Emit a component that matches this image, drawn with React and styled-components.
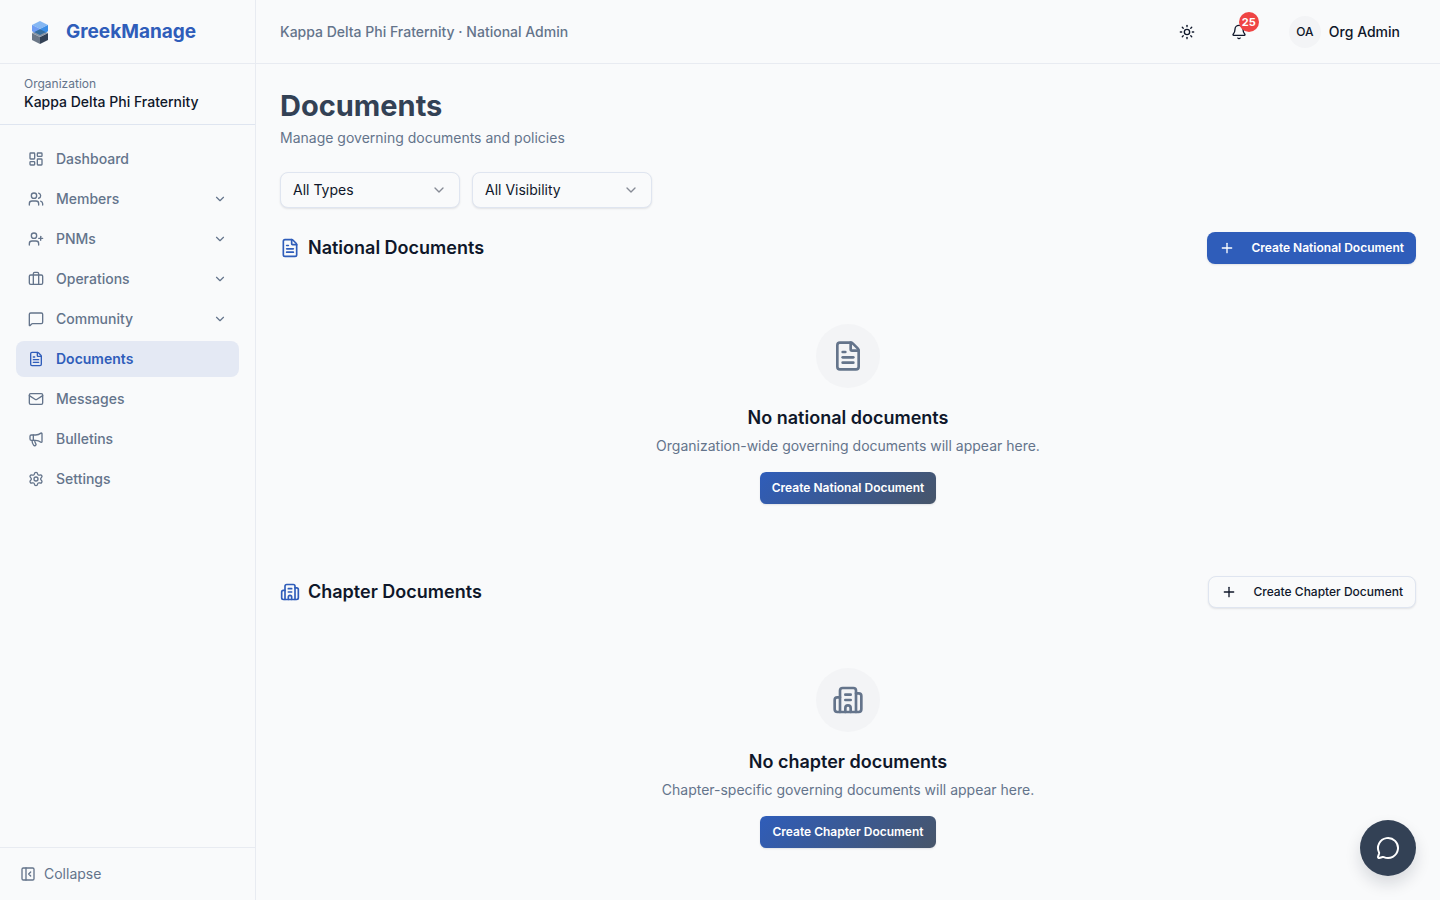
import React, { useState } from "react";
import styled, { createGlobalStyle, css } from "styled-components";
import {
  Bell,
  Briefcase,
  Building2,
  ChevronDown,
  FileText,
  LayoutDashboard,
  Mail,
  Megaphone,
  MessageCircle,
  MessageSquare,
  PanelLeftClose,
  Plus,
  Settings,
  Sun,
  UserPlus,
  Users,
} from "lucide-react";

const GlobalStyle = createGlobalStyle`
  * {
    box-sizing: border-box;
  }
  body {
    margin: 0;
    background: #f9fafb;
    color: #0f172a;
    font-family: Inter, "Liberation Sans", sans-serif;
    font-size: 14px;
    line-height: 20px;
  }
  button, select {
    font: inherit;
    color: inherit;
    cursor: pointer;
  }
  h1, h2, h3, p {
    margin: 0;
  }
  svg {
    flex-shrink: 0;
  }
`;

const Layout = styled.div`
  display: flex;
  height: 100vh;
`;

const Sidebar = styled.aside`
  display: flex;
  flex-direction: column;
  flex: 0 0 256px;
  border-right: 1px solid #e8ebf1;
`;

const Brand = styled.a`
  display: flex;
  align-items: center;
  gap: 14px;
  height: 64px;
  padding: 0 28px;
  border-bottom: 1px solid #e8ebf1;
  color: #2f5dba;
  font-size: 19px;
  line-height: 28px;
  font-weight: 700;
  text-decoration: none;
`;

const Organization = styled.div`
  padding: 12px 24px;
  border-bottom: 1px solid #dfe5f0;
  font-weight: 500;
`;

const OrganizationLabel = styled.div`
  color: #64748b;
  font-size: 12px;
  line-height: 16px;
  font-weight: 400;
`;

const Nav = styled.nav`
  display: flex;
  flex-direction: column;
  flex: 1;
  gap: 4px;
  padding: 16px;
`;

const navItem = css`
  display: flex;
  align-items: center;
  gap: 12px;
  height: 36px;
  padding: 0 12px;
  border: 0;
  border-radius: 8px;
  background: ${(p) => (p.$active ? "#e4e9f4" : "transparent")};
  color: ${(p) => (p.$active ? "#2f5dba" : "#64748b")};
  font-weight: ${(p) => (p.$active ? 600 : 500)};
  text-align: left;
  text-decoration: none;
`;

const NavLink = styled.a`
  ${navItem}
`;

const NavGroup = styled.button`
  ${navItem}
`;

const NavLabel = styled.span`
  flex: 1;
`;

const SidebarFooter = styled.div`
  padding: 8px;
  border-top: 1px solid #e8ebf1;
`;

const CollapseButton = styled.button`
  display: flex;
  align-items: center;
  gap: 8px;
  width: 100%;
  height: 36px;
  padding: 0 12px;
  border: 0;
  background: transparent;
  color: #64748b;
`;

const Content = styled.div`
  display: flex;
  flex-direction: column;
  flex: 1;
  min-width: 0;
`;

const TopBar = styled.header`
  display: flex;
  align-items: center;
  justify-content: space-between;
  flex: 0 0 64px;
  padding: 0 24px;
  border-bottom: 1px solid #e8ebf1;
`;

const Context = styled.div`
  color: #64748b;
  font-weight: 500;
`;

const Actions = styled.div`
  display: flex;
  align-items: center;
  gap: 16px;
`;

const IconButton = styled.button`
  position: relative;
  display: grid;
  place-items: center;
  width: 36px;
  height: 36px;
  padding: 0;
  border: 0;
  background: transparent;
`;

const Badge = styled.span`
  position: absolute;
  top: -2px;
  right: -2px;
  width: 20px;
  height: 20px;
  border-radius: 50%;
  background: #ef4444;
  color: #fff;
  font-size: 11px;
  font-weight: 700;
`;

const UserButton = styled.button`
  display: flex;
  align-items: center;
  gap: 8px;
  height: 36px;
  padding: 0 16px;
  border: 0;
  background: transparent;
  font-weight: 500;
`;

const Avatar = styled.span`
  display: grid;
  place-items: center;
  width: 32px;
  height: 32px;
  border-radius: 50%;
  background: #f3f4f6;
  font-size: 12px;
`;

const Main = styled.main`
  display: flex;
  flex-direction: column;
  flex: 1;
  gap: 24px;
  min-height: 0;
  padding: 24px;
  overflow-y: auto;
  scrollbar-width: none;
`;

const PageTitle = styled.h1`
  margin-bottom: 4px;
  color: #334155;
  font-size: 29px;
  line-height: 36px;
  font-weight: 700;
`;

const Muted = styled.p`
  color: #64748b;
`;

const Filters = styled.div`
  display: flex;
  gap: 12px;
`;

const SelectBox = styled.div`
  display: grid;
  align-items: center;
  width: 180px;

  select, svg {
    grid-area: 1 / 1;
  }
  svg {
    justify-self: end;
    margin-right: 13px;
    color: #868b95;
    pointer-events: none;
  }
`;

const Select = styled.select`
  appearance: none;
  width: 100%;
  height: 36px;
  padding: 0 36px 0 12px;
  border: 1px solid #dfe5f0;
  border-radius: 8px;
  background: #f9fafb;
  box-shadow: 0 1px 2px rgba(15, 23, 42, 0.1);
`;

const Section = styled.section`
  display: flex;
  flex-direction: column;
  gap: 12px;
`;

const SectionHeader = styled.div`
  display: flex;
  align-items: center;
  justify-content: space-between;
`;

const SectionTitle = styled.h2`
  display: flex;
  align-items: center;
  gap: 8px;
  font-size: 18px;
  line-height: 28px;
  font-weight: 600;

  svg {
    color: #2f5dba;
  }
`;

const variants = {
  primary: css`
    background: #2f5dba;
    color: #fff;
  `,
  outline: css`
    border: 1px solid #dfe5f0;
    background: #f9fafb;
  `,
  gradient: css`
    background: linear-gradient(135deg, #2f5dba, #475569);
    color: #fff;
  `,
};

const Button = styled.button`
  display: inline-flex;
  align-items: center;
  gap: 16px;
  height: 32px;
  padding: 0 12px;
  border: 0;
  border-radius: ${(p) => (p.$variant === "gradient" ? "6px" : "8px")};
  box-shadow: 0 1px 2px rgba(15, 23, 42, 0.1);
  font-size: 12px;
  line-height: 16px;
  font-weight: ${(p) => (p.$variant === "outline" ? 500 : 600)};
  white-space: nowrap;
  ${(p) => variants[p.$variant]}
`;

const Empty = styled.div`
  display: flex;
  flex-direction: column;
  align-items: center;
  padding: 48px 16px;
  text-align: center;
`;

const EmptyIcon = styled.div`
  display: grid;
  place-items: center;
  width: 64px;
  height: 64px;
  margin-bottom: 16px;
  border-radius: 50%;
  background: #f3f4f6;
  color: #64748b;
`;

const EmptyTitle = styled.h3`
  margin-bottom: 4px;
  font-size: 18px;
  line-height: 28px;
  font-weight: 600;
`;

const EmptyText = styled(Muted)`
  margin-bottom: 16px;
`;

const ChatButton = styled.button`
  position: fixed;
  right: 24px;
  bottom: 24px;
  display: grid;
  place-items: center;
  width: 56px;
  height: 56px;
  padding: 0;
  border: 0;
  border-radius: 50%;
  background: #334155;
  box-shadow: 0 8px 16px rgba(15, 23, 42, 0.14);
  color: #fff;
`;

const navItems = [
  { label: "Dashboard", icon: LayoutDashboard },
  { label: "Members", icon: Users, group: true },
  { label: "PNMs", icon: UserPlus, group: true },
  { label: "Operations", icon: Briefcase, group: true },
  { label: "Community", icon: MessageSquare, group: true },
  { label: "Documents", icon: FileText, active: true },
  { label: "Messages", icon: Mail },
  { label: "Bulletins", icon: Megaphone },
  { label: "Settings", icon: Settings },
];

const Logo = () => (
  <svg width="24" height="24" viewBox="0 0 24 24" aria-hidden="true">
    <path d="M4 13L12 17V24L4 20Z" fill="#6b7787" />
    <path d="M20 13L12 17V24L20 20Z" fill="#334155" />
    <path d="M4 13L12 9L20 13L12 17Z" fill="#8794a5" />
    <path d="M4 5L12 9L7 13L4 11Z" fill="#6f9cf3" />
    <path d="M20 5L12 9L17 13L20 11Z" fill="#3b8de6" />
    <path d="M12 9L18 12L12 15L6 12Z" fill="#366e9f" />
    <path d="M4 5L12 9L6 12L4 11Z" fill="#6f9cf3" />
    <path d="M20 5L12 9L18 12L20 11Z" fill="#3b8de6" />
    <path d="M4 5L12 1L20 5L12 9Z" fill="#85b7f3" />
  </svg>
);

const NavItem = ({ item }) => {
  const Icon = item.icon;
  if (item.group) {
    return (
      <NavGroup type="button" aria-expanded="false">
        <Icon size={16} />
        <NavLabel>{item.label}</NavLabel>
        <ChevronDown size={14} />
      </NavGroup>
    );
  }
  return (
    <NavLink href="#" $active={item.active} aria-current={item.active ? "page" : undefined}>
      <Icon size={16} />
      <NavLabel>{item.label}</NavLabel>
    </NavLink>
  );
};

const Filter = ({ label, options }) => {
  const [value, setValue] = useState(options[0]);
  return (
    <SelectBox>
      <Select aria-label={label} value={value} onChange={(e) => setValue(e.target.value)}>
        {options.map((option) => (
          <option key={option}>{option}</option>
        ))}
      </Select>
      <ChevronDown size={16} />
    </SelectBox>
  );
};

const DocumentSection = ({ icon: Icon, title, action, variant, emptyTitle, emptyText }) => (
  <Section>
    <SectionHeader>
      <SectionTitle>
        <Icon size={20} />
        {title}
      </SectionTitle>
      <Button type="button" $variant={variant}>
        <Plus size={16} />
        {action}
      </Button>
    </SectionHeader>
    <Empty>
      <EmptyIcon>
        <Icon size={32} />
      </EmptyIcon>
      <EmptyTitle>{emptyTitle}</EmptyTitle>
      <EmptyText>{emptyText}</EmptyText>
      <Button type="button" $variant="gradient">
        {action}
      </Button>
    </Empty>
  </Section>
);

const App = () => {
  return (
    <>
      <GlobalStyle />
      <Layout>
        <Sidebar>
          <Brand href="#">
            <Logo />
            GreekManage
          </Brand>
          <Organization>
            <OrganizationLabel>Organization</OrganizationLabel>
            Kappa Delta Phi Fraternity
          </Organization>
          <Nav>
            {navItems.map((item) => (
              <NavItem key={item.label} item={item} />
            ))}
          </Nav>
          <SidebarFooter>
            <CollapseButton type="button">
              <PanelLeftClose size={16} />
              Collapse
            </CollapseButton>
          </SidebarFooter>
        </Sidebar>
        <Content>
          <TopBar>
            <Context>Kappa Delta Phi Fraternity · National Admin</Context>
            <Actions>
              <IconButton type="button" aria-label="Toggle theme">
                <Sun size={16} />
              </IconButton>
              <IconButton type="button" aria-label="Notifications">
                <Bell size={16} />
                <Badge>25</Badge>
              </IconButton>
              <UserButton type="button">
                <Avatar>OA</Avatar>
                Org Admin
              </UserButton>
            </Actions>
          </TopBar>
          <Main>
            <div>
              <PageTitle>Documents</PageTitle>
              <Muted>Manage governing documents and policies</Muted>
            </div>
            <Filters>
              <Filter label="Document type" options={["All Types", "Bylaws", "Policies"]} />
              <Filter label="Visibility" options={["All Visibility", "Public", "Private"]} />
            </Filters>
            <DocumentSection
              icon={FileText}
              title="National Documents"
              action="Create National Document"
              variant="primary"
              emptyTitle="No national documents"
              emptyText="Organization-wide governing documents will appear here."
            />
            <DocumentSection
              icon={Building2}
              title="Chapter Documents"
              action="Create Chapter Document"
              variant="outline"
              emptyTitle="No chapter documents"
              emptyText="Chapter-specific governing documents will appear here."
            />
          </Main>
        </Content>
      </Layout>
      <ChatButton type="button" aria-label="Open chat">
        <MessageCircle size={24} />
      </ChatButton>
    </>
  );
};

export default App;
